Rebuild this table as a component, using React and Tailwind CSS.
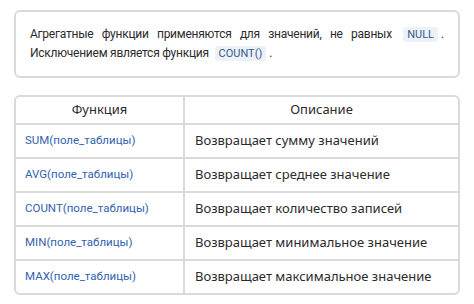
import React from "react";

const rows = [
  { fn: "SUM", desc: "Возвращает сумму значений" },
  { fn: "AVG", desc: "Возвращает среднее значение" },
  { fn: "COUNT", desc: "Возвращает количество записей" },
  { fn: "MIN", desc: "Возвращает минимальное значение" },
  { fn: "MAX", desc: "Возвращает максимальное значение" },
];

const firstLine = ["Агрегатные", "функции", "применяются", "для", "значений,", "не", "равных"];

function Code({ children }) {
  return (
    <span className="mx-[3px] rounded-[3px] bg-[#edf2f8] px-[4px] py-[1px] font-['Roboto',sans-serif] text-[11px] tracking-normal text-[#37598f]">
      {children}
    </span>
  );
}

export default function App() {
  return (
    <div className="h-[304px] w-[474px] bg-white px-[14px] pt-[10px] font-['Noto_Sans',sans-serif] text-[#2b2b2b]">
      <div className="rounded-[6px] border-2 border-[#dadada] px-[14px] py-[13px] font-['Roboto',sans-serif] text-[12px] leading-[19px] tracking-[-0.25px]">
        <div className="flex justify-between whitespace-nowrap">
          {firstLine.map((w) => (
            <span key={w}>{w}</span>
          ))}
          <span>
            <Code>NULL</Code>.
          </span>
        </div>
        <p>
          Исключением является функция <Code>COUNT()</Code>.
        </p>
      </div>

      <div className="mt-[17px] overflow-hidden rounded-[6px] border-2 border-[#dadada]">
        <div className="grid grid-cols-[169px_1fr]">
          <div className="flex h-[26px] items-center justify-center border-r-2 border-[#dadada] text-[13px]">
            Функция
          </div>
          <div className="flex h-[26px] items-center justify-center text-[13px]">Описание</div>
          {rows.map((r) => (
            <React.Fragment key={r.fn}>
              <div className="flex h-[34px] items-center border-r-2 border-t-2 border-[#dadada] pl-[9px] font-['Roboto',sans-serif] text-[11.5px] text-[#3262ae]">
                {r.fn}(поле_таблицы)
              </div>
              <div className="flex h-[34px] items-center border-t-2 border-[#dadada] pl-[10px] text-[13px]">
                {r.desc}
              </div>
            </React.Fragment>
          ))}
        </div>
      </div>
    </div>
  );
}
